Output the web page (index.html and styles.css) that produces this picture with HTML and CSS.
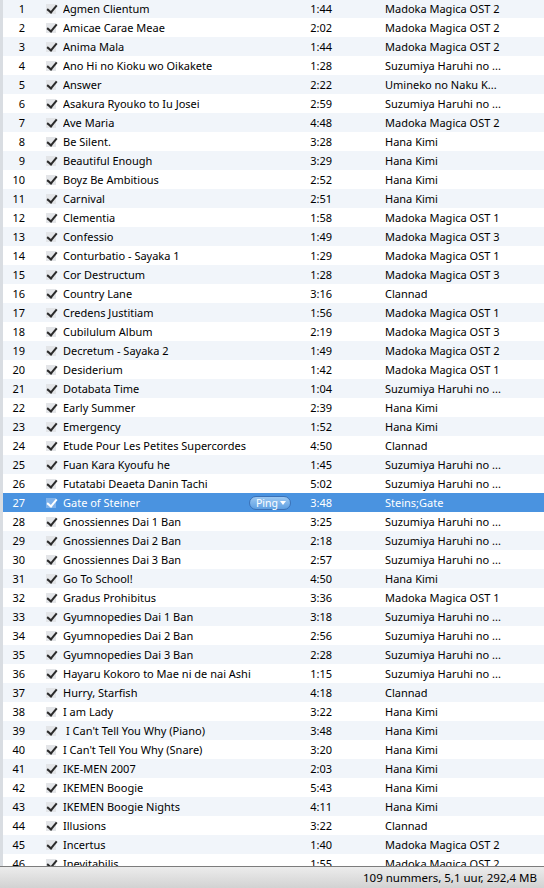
FILE: index.html
```html
<!DOCTYPE html>
<html>
<head>
<meta charset="utf-8">
<link rel="stylesheet" href="styles.css">
</head>
<body>
<div class="app">
  <div class="list">
    <div class="row"><span class="num">1</span><span class="chk"></span><span class="title">Agmen Clientum</span><span class="time">1:44</span><span class="artist">Madoka Magica OST 2</span></div>
    <div class="row"><span class="num">2</span><span class="chk"></span><span class="title">Amicae Carae Meae</span><span class="time">2:02</span><span class="artist">Madoka Magica OST 2</span></div>
    <div class="row"><span class="num">3</span><span class="chk"></span><span class="title">Anima Mala</span><span class="time">1:44</span><span class="artist">Madoka Magica OST 2</span></div>
    <div class="row"><span class="num">4</span><span class="chk"></span><span class="title">Ano Hi no Kioku wo Oikakete</span><span class="time">1:28</span><span class="artist">Suzumiya Haruhi no ...</span></div>
    <div class="row"><span class="num">5</span><span class="chk"></span><span class="title">Answer</span><span class="time">2:22</span><span class="artist">Umineko no Naku K...</span></div>
    <div class="row"><span class="num">6</span><span class="chk"></span><span class="title">Asakura Ryouko to Iu Josei</span><span class="time">2:59</span><span class="artist">Suzumiya Haruhi no ...</span></div>
    <div class="row"><span class="num">7</span><span class="chk"></span><span class="title">Ave Maria</span><span class="time">4:48</span><span class="artist">Madoka Magica OST 2</span></div>
    <div class="row"><span class="num">8</span><span class="chk"></span><span class="title">Be Silent.</span><span class="time">3:28</span><span class="artist">Hana Kimi</span></div>
    <div class="row"><span class="num">9</span><span class="chk"></span><span class="title">Beautiful Enough</span><span class="time">3:29</span><span class="artist">Hana Kimi</span></div>
    <div class="row"><span class="num">10</span><span class="chk"></span><span class="title">Boyz Be Ambitious</span><span class="time">2:52</span><span class="artist">Hana Kimi</span></div>
    <div class="row"><span class="num">11</span><span class="chk"></span><span class="title">Carnival</span><span class="time">2:51</span><span class="artist">Hana Kimi</span></div>
    <div class="row"><span class="num">12</span><span class="chk"></span><span class="title">Clementia</span><span class="time">1:58</span><span class="artist">Madoka Magica OST 1</span></div>
    <div class="row"><span class="num">13</span><span class="chk"></span><span class="title">Confessio</span><span class="time">1:49</span><span class="artist">Madoka Magica OST 3</span></div>
    <div class="row"><span class="num">14</span><span class="chk"></span><span class="title">Conturbatio - Sayaka 1</span><span class="time">1:29</span><span class="artist">Madoka Magica OST 1</span></div>
    <div class="row"><span class="num">15</span><span class="chk"></span><span class="title">Cor Destructum</span><span class="time">1:28</span><span class="artist">Madoka Magica OST 3</span></div>
    <div class="row"><span class="num">16</span><span class="chk"></span><span class="title">Country Lane</span><span class="time">3:16</span><span class="artist">Clannad</span></div>
    <div class="row"><span class="num">17</span><span class="chk"></span><span class="title">Credens Justitiam</span><span class="time">1:56</span><span class="artist">Madoka Magica OST 1</span></div>
    <div class="row"><span class="num">18</span><span class="chk"></span><span class="title">Cubilulum Album</span><span class="time">2:19</span><span class="artist">Madoka Magica OST 3</span></div>
    <div class="row"><span class="num">19</span><span class="chk"></span><span class="title">Decretum - Sayaka 2</span><span class="time">1:49</span><span class="artist">Madoka Magica OST 2</span></div>
    <div class="row"><span class="num">20</span><span class="chk"></span><span class="title">Desiderium</span><span class="time">1:42</span><span class="artist">Madoka Magica OST 1</span></div>
    <div class="row"><span class="num">21</span><span class="chk"></span><span class="title">Dotabata Time</span><span class="time">1:04</span><span class="artist">Suzumiya Haruhi no ...</span></div>
    <div class="row"><span class="num">22</span><span class="chk"></span><span class="title">Early Summer</span><span class="time">2:39</span><span class="artist">Hana Kimi</span></div>
    <div class="row"><span class="num">23</span><span class="chk"></span><span class="title">Emergency</span><span class="time">1:52</span><span class="artist">Hana Kimi</span></div>
    <div class="row"><span class="num">24</span><span class="chk"></span><span class="title">Etude Pour Les Petites Supercordes</span><span class="time">4:50</span><span class="artist">Clannad</span></div>
    <div class="row"><span class="num">25</span><span class="chk"></span><span class="title">Fuan Kara Kyoufu he</span><span class="time">1:45</span><span class="artist">Suzumiya Haruhi no ...</span></div>
    <div class="row"><span class="num">26</span><span class="chk"></span><span class="title">Futatabi Deaeta Danin Tachi</span><span class="time">5:02</span><span class="artist">Suzumiya Haruhi no ...</span></div>
    <div class="row selected"><span class="num">27</span><span class="chk"></span><span class="title">Gate of Steiner<span class="ping">Ping<span class="caret"></span></span></span><span class="time">3:48</span><span class="artist">Steins;Gate</span></div>
    <div class="row"><span class="num">28</span><span class="chk"></span><span class="title">Gnossiennes Dai 1 Ban</span><span class="time">3:25</span><span class="artist">Suzumiya Haruhi no ...</span></div>
    <div class="row"><span class="num">29</span><span class="chk"></span><span class="title">Gnossiennes Dai 2 Ban</span><span class="time">2:18</span><span class="artist">Suzumiya Haruhi no ...</span></div>
    <div class="row"><span class="num">30</span><span class="chk"></span><span class="title">Gnossiennes Dai 3 Ban</span><span class="time">2:57</span><span class="artist">Suzumiya Haruhi no ...</span></div>
    <div class="row"><span class="num">31</span><span class="chk"></span><span class="title">Go To School!</span><span class="time">4:50</span><span class="artist">Hana Kimi</span></div>
    <div class="row"><span class="num">32</span><span class="chk"></span><span class="title">Gradus Prohibitus</span><span class="time">3:36</span><span class="artist">Madoka Magica OST 1</span></div>
    <div class="row"><span class="num">33</span><span class="chk"></span><span class="title">Gyumnopedies Dai 1 Ban</span><span class="time">3:18</span><span class="artist">Suzumiya Haruhi no ...</span></div>
    <div class="row"><span class="num">34</span><span class="chk"></span><span class="title">Gyumnopedies Dai 2 Ban</span><span class="time">2:56</span><span class="artist">Suzumiya Haruhi no ...</span></div>
    <div class="row"><span class="num">35</span><span class="chk"></span><span class="title">Gyumnopedies Dai 3 Ban</span><span class="time">2:28</span><span class="artist">Suzumiya Haruhi no ...</span></div>
    <div class="row"><span class="num">36</span><span class="chk"></span><span class="title">Hayaru Kokoro to Mae ni de nai Ashi</span><span class="time">1:15</span><span class="artist">Suzumiya Haruhi no ...</span></div>
    <div class="row"><span class="num">37</span><span class="chk"></span><span class="title">Hurry, Starfish</span><span class="time">4:18</span><span class="artist">Clannad</span></div>
    <div class="row"><span class="num">38</span><span class="chk"></span><span class="title">I am Lady</span><span class="time">3:22</span><span class="artist">Hana Kimi</span></div>
    <div class="row"><span class="num">39</span><span class="chk"></span><span class="title indent">I Can't Tell You Why (Piano)</span><span class="time">3:48</span><span class="artist">Hana Kimi</span></div>
    <div class="row"><span class="num">40</span><span class="chk"></span><span class="title">I Can't Tell You Why (Snare)</span><span class="time">3:20</span><span class="artist">Hana Kimi</span></div>
    <div class="row"><span class="num">41</span><span class="chk"></span><span class="title">IKE-MEN 2007</span><span class="time">2:03</span><span class="artist">Hana Kimi</span></div>
    <div class="row"><span class="num">42</span><span class="chk"></span><span class="title">IKEMEN Boogie</span><span class="time">5:43</span><span class="artist">Hana Kimi</span></div>
    <div class="row"><span class="num">43</span><span class="chk"></span><span class="title">IKEMEN Boogie Nights</span><span class="time">4:11</span><span class="artist">Hana Kimi</span></div>
    <div class="row"><span class="num">44</span><span class="chk"></span><span class="title">Illusions</span><span class="time">3:22</span><span class="artist">Clannad</span></div>
    <div class="row"><span class="num">45</span><span class="chk"></span><span class="title">Incertus</span><span class="time">1:40</span><span class="artist">Madoka Magica OST 2</span></div>
    <div class="row"><span class="num">46</span><span class="chk"></span><span class="title">Inevitabilis</span><span class="time">1:55</span><span class="artist">Madoka Magica OST 2</span></div>
  </div>
  <div class="status">109 nummers, 5,1 uur, 292,4 MB</div>
</div>
</body>
</html>
```

FILE: styles.css
```css
html, body {
  margin: 0;
  padding: 0;
  background: #ffffff;
}
.app {
  width: 544px;
  height: 888px;
  display: flex;
  flex-direction: column;
  overflow: hidden;
  font-family: "Noto Sans", "Open Sans", sans-serif;
  font-size: 11px;
  color: #000;
}
.list {
  height: 866px;
  flex: none;
  overflow: hidden;
  border-left: 3px solid #d9dde2;
  box-sizing: border-box;
}
.row {
  display: flex;
  align-items: center;
  height: 19px;
  line-height: 19px;
  white-space: nowrap;
  background: #ffffff;
}
.row:first-child {
  margin-top: -1px;
}
.row:nth-child(odd) {
  background: #f1f5fa;
}
.num {
  width: 22px;
  text-align: right;
  flex: none;
}
.chk {
  flex: none;
  width: 10px;
  height: 10px;
  margin-left: 21px;
  background: #e3e5e8;
  position: relative;
}
.chk::after {
  content: "";
  position: absolute;
  left: 3px;
  top: -1px;
  width: 4px;
  height: 8px;
  border-right: 2px solid #2a2a2a;
  border-bottom: 2px solid #2a2a2a;
  transform: rotate(40deg);
}
.title {
  flex: none;
  width: 229px;
  margin-left: 7px;
  display: flex;
  align-items: center;
  overflow: hidden;
}
.title.indent {
  padding-left: 3px;
  box-sizing: border-box;
}
.time {
  flex: none;
  width: 40px;
  text-align: right;
}
.artist {
  flex: none;
  margin-left: 53px;
}
.row.selected {
  background: #4a93e0;
  color: #ffffff;
}
.row.selected .chk {
  background: #7fb2ea;
}
.row.selected .chk::after {
  border-color: #ffffff;
}
.ping {
  margin-left: auto;
  margin-right: 1px;
  height: 12px;
  line-height: 12px;
  padding: 0 4px 0 6px;
  border-radius: 7px;
  border: 1px solid #3b72b8;
  background: linear-gradient(#9cc8f2, #5e9fe2);
  color: #ffffff;
  font-size: 10.5px;
  display: flex;
  align-items: center;
  gap: 2px;
}
.caret {
  width: 0;
  height: 0;
  border-left: 3px solid transparent;
  border-right: 3px solid transparent;
  border-top: 4px solid #ffffff;
}
.status {
  flex: none;
  height: 21px;
  line-height: 21px;
  border-top: 1px solid #7c7c7c;
  background: linear-gradient(#ececec, #d2d2d2);
  text-align: right;
  padding-right: 7px;
  font-size: 11.5px;
}
```
